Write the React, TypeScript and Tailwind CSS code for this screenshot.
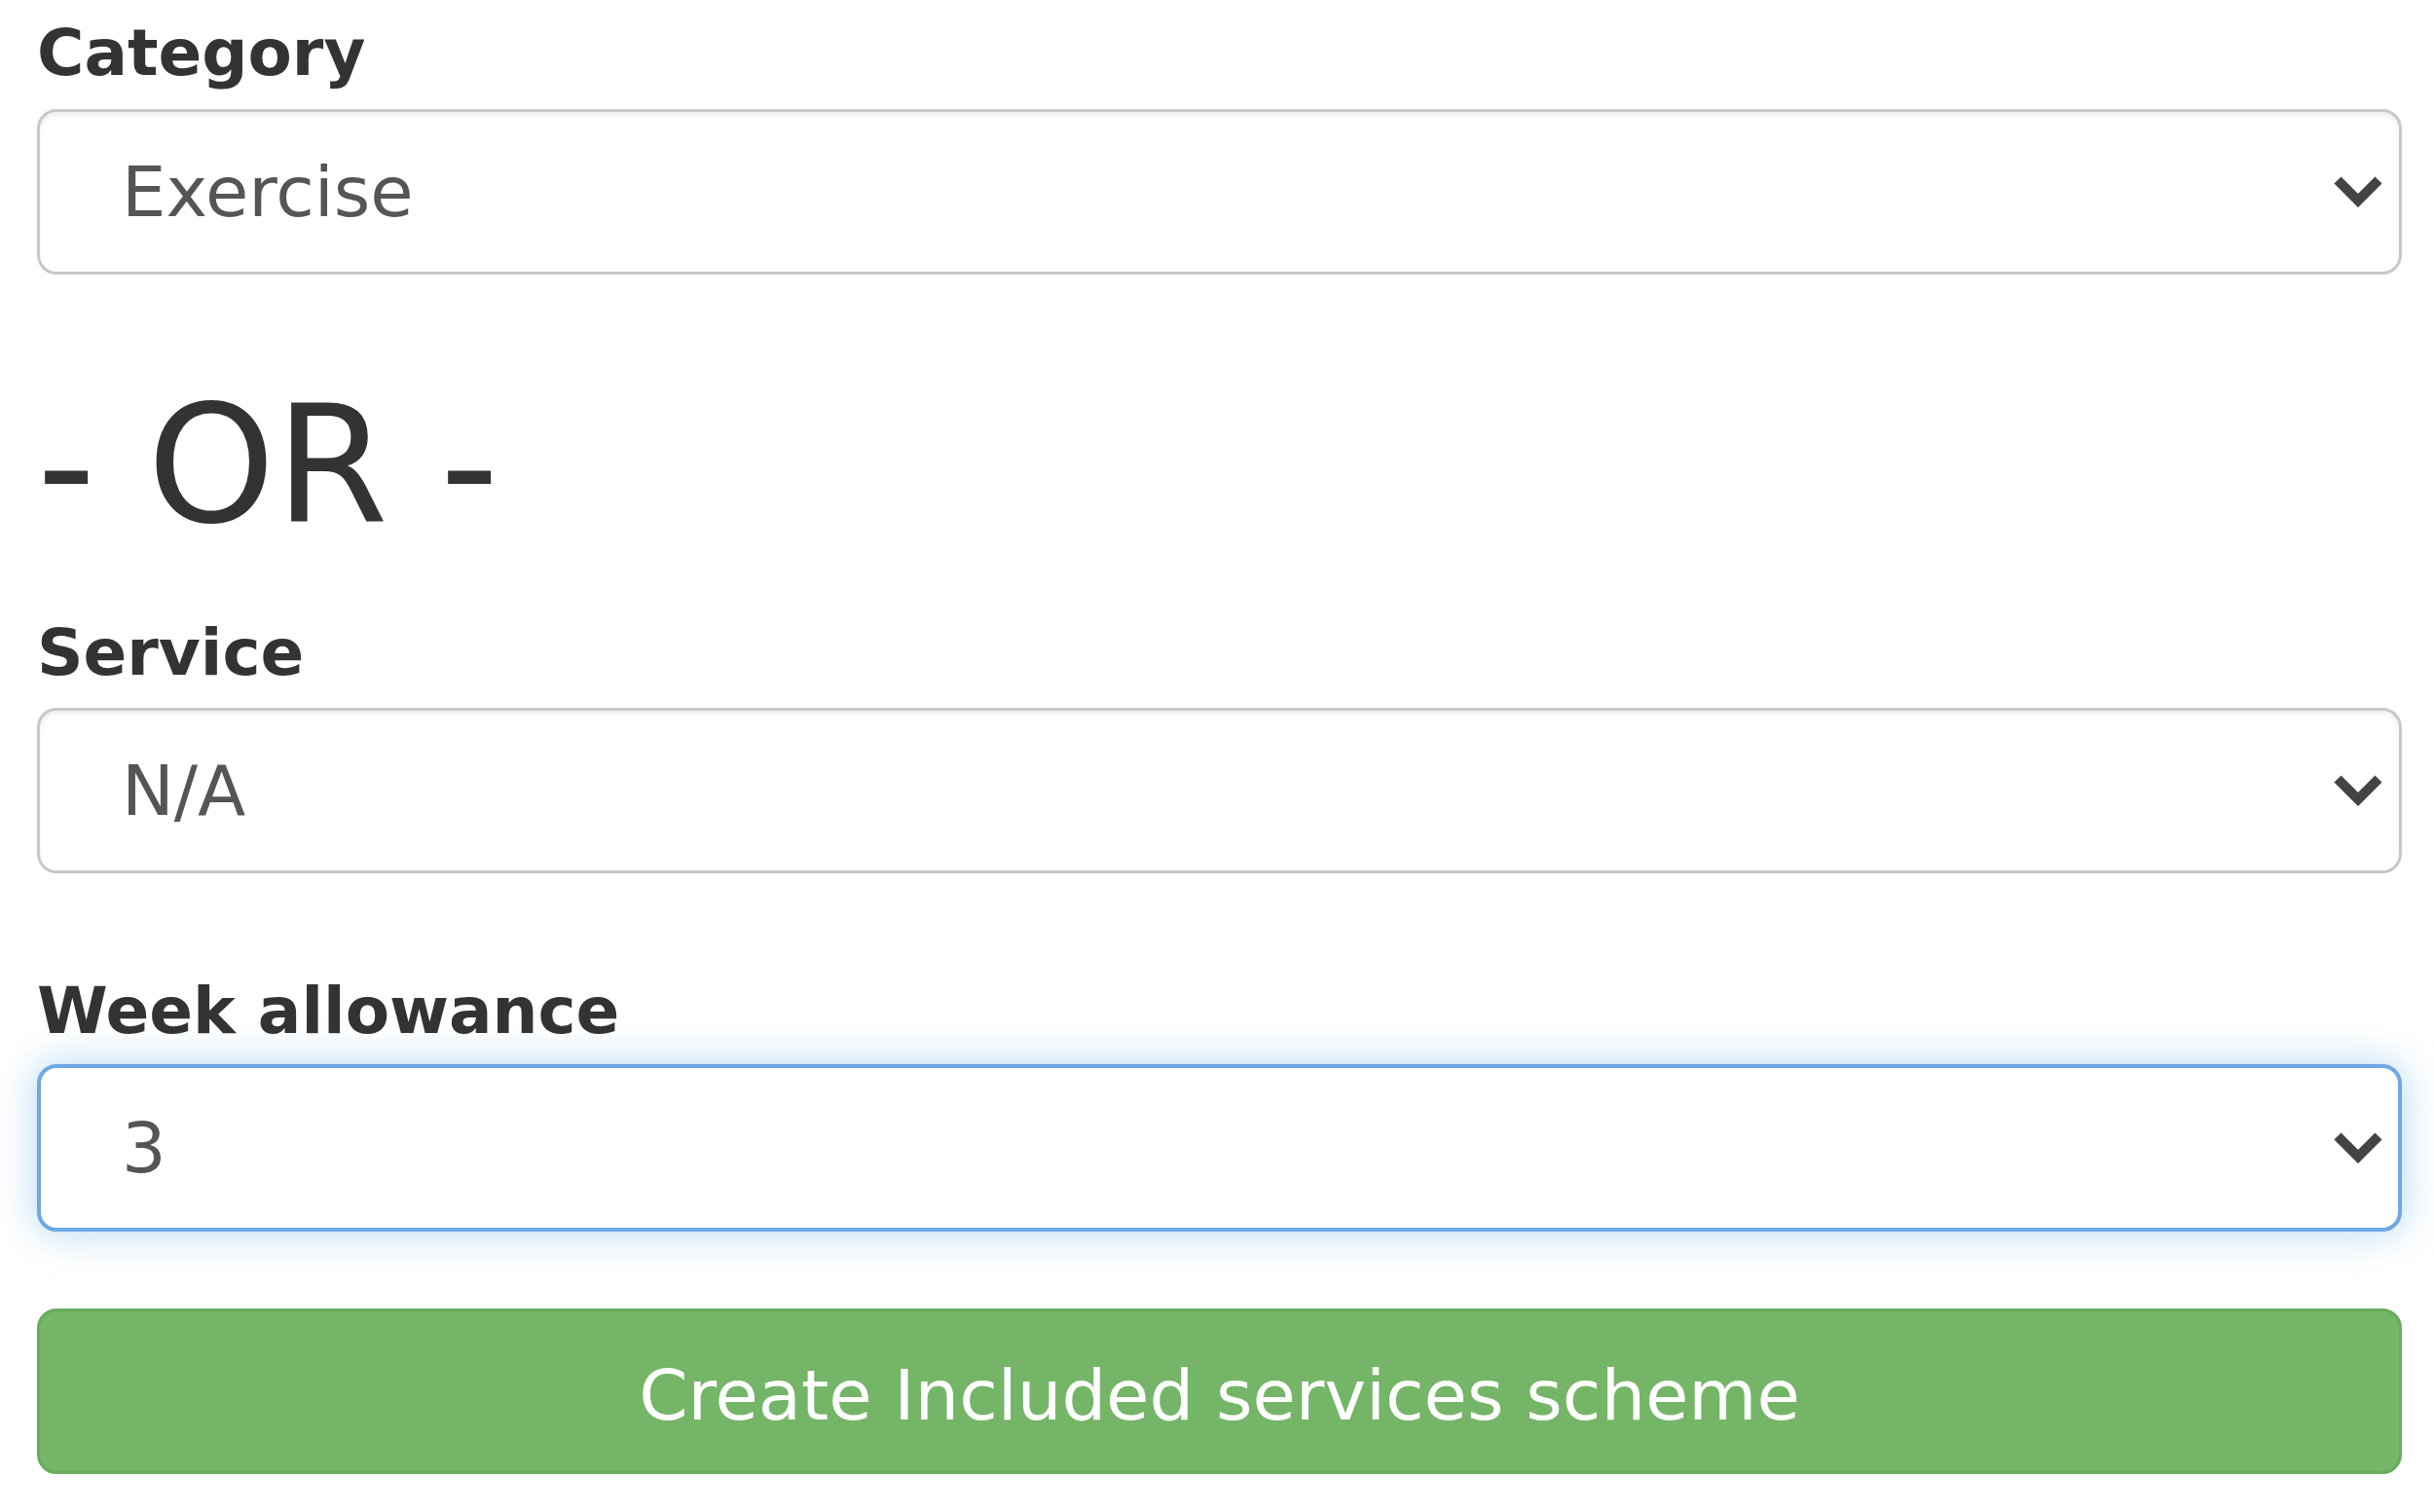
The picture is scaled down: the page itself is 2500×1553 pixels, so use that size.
import { FC } from 'react';

const Chevron: FC = () => (
  <svg width="50" height="32" viewBox="0 0 50 32" className="shrink-0">
    <path d="M4 4 L25 25 L46 4" fill="none" stroke="#444444" strokeWidth="10" strokeLinejoin="miter" />
  </svg>
);

const SelectBox: FC<{ value: string; focused?: boolean }> = ({ value, focused }) => (
  <div
    className={
      focused
        ? 'flex h-[172px] items-center justify-between rounded-[20px] border-4 border-[#6fa8e6] bg-white pl-[83px] pr-[16px] shadow-[0_0_40px_rgba(102,175,233,0.5)]'
        : 'flex h-[170px] items-center justify-between rounded-[20px] border-[3px] border-[#c8c8c8] bg-white pl-[84px] pr-[17px] shadow-[inset_0_4px_4px_rgba(0,0,0,0.06)]'
    }
  >
    <span className="text-[72px] leading-[80px] text-[#555555]">{value}</span>
    <Chevron />
  </div>
);

const Label: FC<{ text: string }> = ({ text }) => (
  <label className="block text-[66px] font-bold leading-[80px] text-[#333333]">{text}</label>
);

const App: FC = () => {
  return (
    <div className="min-h-screen bg-white pl-[38px] pr-[33px] pt-[15px] pb-[37px] font-['DejaVu_Sans','Verdana',sans-serif]">
      <div className="mb-[17px]">
        <Label text="Category" />
      </div>
      <SelectBox value="Exercise" />

      <h1 className="mt-[106px] text-[167px] font-normal leading-[180px] text-[#333333]">- OR -</h1>

      <div className="mt-[63px] mb-[16px]">
        <Label text="Service" />
      </div>
      <SelectBox value="N/A" />

      <div className="mt-[102px] mb-[14px]">
        <Label text="Week allowance" />
      </div>
      <SelectBox value="3" focused />

      <button className="mt-[79px] flex h-[170px] w-full items-center justify-center rounded-[20px] border-[3px] border-[#69ab5c] bg-[#75b567] pt-[8px] text-[72px] leading-[80px] text-white">
        Create Included services scheme
      </button>
    </div>
  );
};

export default App;
